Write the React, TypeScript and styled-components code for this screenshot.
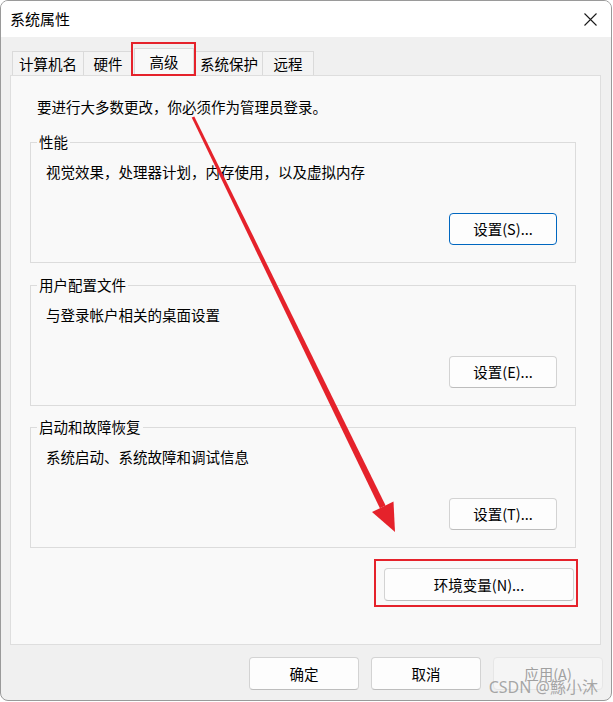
import React from "react";
import styled, { createGlobalStyle } from "styled-components";

const GlobalStyle = createGlobalStyle`
  html, body { margin: 0; padding: 0; background: #ffffff; }
  body { font-family: "Noto Sans CJK SC", "Noto Sans", sans-serif; }
  *, *::before, *::after { box-sizing: border-box; }
`;

const FONT = `"Noto Sans CJK SC", "Noto Sans", sans-serif`;
const RED = "#e5222b";

const Window = styled.div`
  position: relative;
  width: 612px;
  height: 701px;
  border: 1px solid #9a9a9a;
  border-radius: 8px;
  background: #f0f0f0;
  overflow: hidden;
  display: flex;
  flex-direction: column;
  font-family: ${FONT};
  font-size: 14.5px;
  line-height: 20px;
  color: #000;
`;

const TitleBar = styled.div`
  height: 36px;
  flex: none;
  background: #ffffff;
  display: flex;
  align-items: center;
  justify-content: space-between;
  padding: 0 14px 0 9px;
`;

const Title = styled.span`
  font-size: 15px;
  line-height: 20px;
`;

const CloseIcon = styled.svg`
  width: 13px;
  height: 13px;
  display: block;
`;

const TabStrip = styled.div`
  display: flex;
  align-items: flex-end;
  height: 38px;
  padding-left: 11px;
  flex: none;
`;

const Tab = styled.div<{ $active?: boolean; $w: number }>`
  position: relative;
  width: ${(p) => p.$w}px;
  height: ${(p) => (p.$active ? 28 : 24)}px;
  margin: ${(p) => (p.$active ? "0 1px -1px 2px" : "0 -1px 0 0")};
  z-index: ${(p) => (p.$active ? 2 : 0)};
  background: ${(p) => (p.$active ? "#f9f9f9" : "#f3f3f3")};
  border: 1px solid #dadada;
  border-bottom: none;
  display: flex;
  justify-content: center;
  align-items: ${(p) => (p.$active ? "flex-start" : "center")};
  padding-top: ${(p) => (p.$active ? "3px" : "0")};
  white-space: nowrap;
`;

const TabMark = styled.div`
  position: absolute;
  left: -4px;
  right: -3px;
  top: -7px;
  bottom: 0;
  border: 2px solid ${RED};
  pointer-events: none;
`;

const Panel = styled.div`
  margin: 0 10px 0 9px;
  height: 570px;
  flex: none;
  background: #f9f9f9;
  border: 1px solid #dedede;
  padding: 21px 24px 0 19px;
  display: flex;
  flex-direction: column;
`;

const Intro = styled.div`
  margin-left: 7px;
`;

const Group = styled.fieldset<{ $top: number }>`
  margin: ${(p) => p.$top}px 0 0 0;
  border: 1px solid #dcdcdc;
  padding: 10px 18px 17px 15px;
  min-width: 0;
  display: flex;
  flex-direction: column;
`;

const Legend = styled.legend`
  margin-left: -9px;
  padding: 0 2px;
  line-height: 20px;
`;

const Desc = styled.div`
  height: 20px;
`;

const ButtonRow = styled.div<{ $top: number; $right?: number }>`
  display: flex;
  justify-content: flex-end;
  margin-top: ${(p) => p.$top}px;
  margin-right: ${(p) => p.$right ?? 0}px;
`;

const Button = styled.button<{ $w: number; $h?: number; $default?: boolean }>`
  position: relative;
  width: ${(p) => p.$w}px;
  height: ${(p) => p.$h ?? 32}px;
  font-family: ${FONT};
  font-size: 14.5px;
  line-height: 20px;
  color: #000;
  background: #fdfdfd;
  border: 1px solid ${(p) => (p.$default ? "#0067c0" : "#d3d3d3")};
  border-bottom-color: ${(p) => (p.$default ? "#0067c0" : "#bdbdbd")};
  border-radius: 4px;
  padding: 0;
  display: flex;
  align-items: center;
  justify-content: center;
  &:disabled {
    background: #f5f5f5;
    border-color: #e6e6e6;
    color: #a0a0a0;
  }
`;

const ButtonMark = styled.div`
  position: absolute;
  left: -11px;
  right: -5px;
  top: -10px;
  bottom: -7px;
  border: 2px solid ${RED};
  pointer-events: none;
`;

const Footer = styled.div`
  display: flex;
  justify-content: flex-end;
  gap: 12px;
  padding: 12px 8px 0 0;
`;

const Overlay = styled.svg`
  position: absolute;
  left: -1px;
  top: -1px;
  width: 613px;
  height: 702px;
  pointer-events: none;
  z-index: 5;
`;

const Watermark = styled.span`
  position: absolute;
  right: 13px;
  bottom: 3px;
  font-family: "Noto Sans", "Noto Sans CJK SC", sans-serif;
  font-size: 16px;
  line-height: 20px;
  color: rgba(140, 140, 140, 0.75);
  z-index: 6;
  pointer-events: none;
`;

const tabs = [
  { label: "计算机名", w: 72 },
  { label: "硬件", w: 50 },
  { label: "高级", w: 60, active: true },
  { label: "系统保护", w: 68 },
  { label: "远程", w: 52 },
];

const groups = [
  { title: "性能", desc: "视觉效果，处理器计划，内存使用，以及虚拟内存", btn: "设置(S)...", def: true, top: 15 },
  { title: "用户配置文件", desc: "与登录帐户相关的桌面设置", btn: "设置(E)...", top: 12 },
  { title: "启动和故障恢复", desc: "系统启动、系统故障和调试信息", btn: "设置(T)...", top: 11 },
];

// arrow geometry (page coordinates)
const S = { x: 193, y: 117 };
const T = { x: 395, y: 532 };
const dx = T.x - S.x;
const dy = T.y - S.y;
const len = Math.hypot(dx, dy);
const u = { x: dx / len, y: dy / len };
const n = { x: u.y, y: -u.x };
const B = { x: T.x - 28 * u.x, y: T.y - 28 * u.y };
const pt = (p: { x: number; y: number }, k: number) => `${(p.x + n.x * k).toFixed(1)},${(p.y + n.y * k).toFixed(1)}`;
const shaft = [pt(S, 1.4), pt(B, 3.2), pt(B, -3.2), pt(S, -1.4)].join(" ");
const head = [pt(B, 12), `${T.x},${T.y}`, pt(B, -12)].join(" ");

export default function App() {
  return (
    <>
      <GlobalStyle />
      <Window>
        <TitleBar>
          <Title>系统属性</Title>
          <CloseIcon viewBox="0 0 13 13">
            <path d="M0.5 0.5 L12.5 12.5 M12.5 0.5 L0.5 12.5" stroke="#1a1a1a" strokeWidth="1.1" fill="none" />
          </CloseIcon>
        </TitleBar>
        <TabStrip>
          {tabs.map((t) => (
            <Tab key={t.label} $w={t.w} $active={t.active}>
              {t.label}
              {t.active && <TabMark />}
            </Tab>
          ))}
        </TabStrip>
        <Panel>
          <Intro>要进行大多数更改，你必须作为管理员登录。</Intro>
          {groups.map((g) => (
            <Group key={g.title} $top={g.top}>
              <Legend>{g.title}</Legend>
              <Desc>{g.desc}</Desc>
              <ButtonRow $top={31}>
                <Button $w={108} $default={g.def}>{g.btn}</Button>
              </ButtonRow>
            </Group>
          ))}
          <ButtonRow $top={20} $right={2}>
            <Button $w={190} $h={33}>
              环境变量(N)...
              <ButtonMark />
            </Button>
          </ButtonRow>
        </Panel>
        <Footer>
          <Button $w={110} $h={33}>确定</Button>
          <Button $w={110} $h={33}>取消</Button>
          <Button $w={110} $h={33} disabled>应用(A)</Button>
        </Footer>
        <Overlay viewBox="0 0 613 702">
          <polygon points={shaft} fill={RED} />
          <polygon points={head} fill={RED} />
        </Overlay>
        <Watermark>CSDN @鯀小沐</Watermark>
      </Window>
    </>
  );
}
